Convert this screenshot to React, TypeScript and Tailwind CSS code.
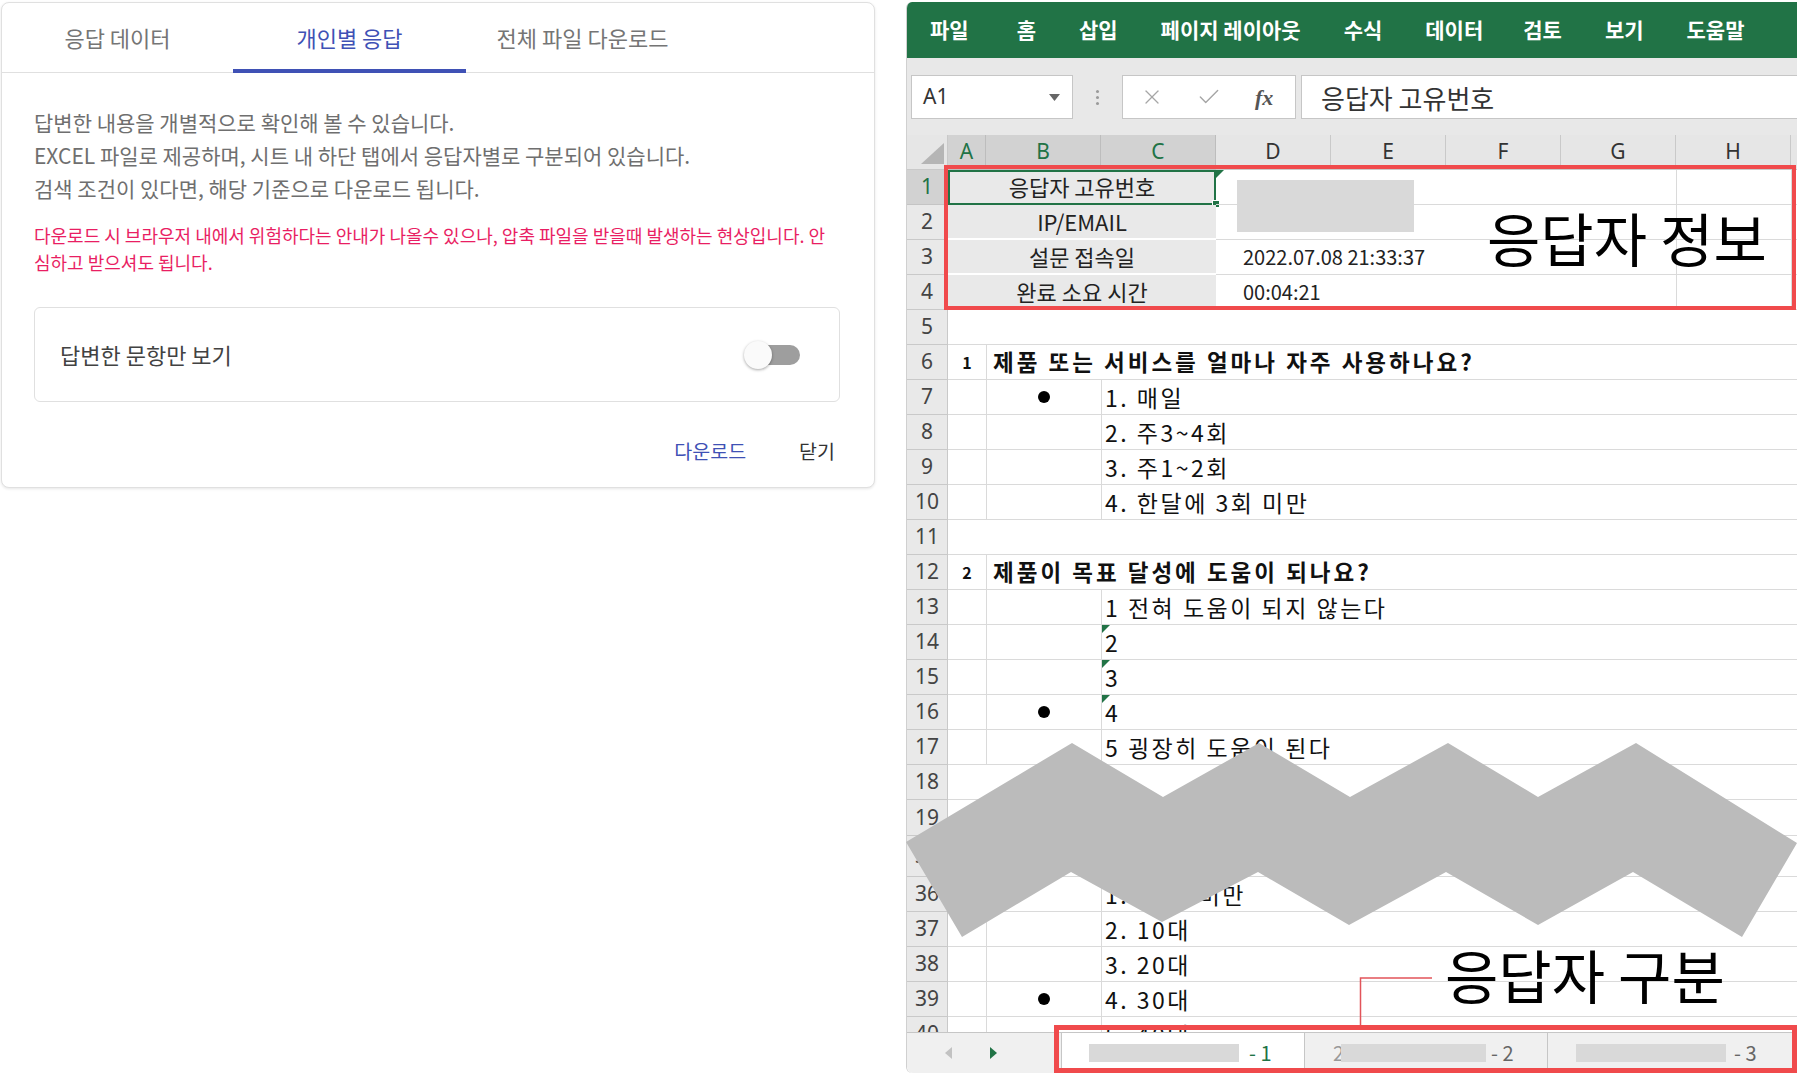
import { X, Check } from "lucide-react"

const GREEN = "#217346"

function RowHead({ n, sel = false }: { n: string; sel?: boolean }) {
  return (
    <div
      className={
        sel
          ? "flex w-[41px] shrink-0 items-center justify-center border-b border-r border-[#c4c4c4] bg-[#d2d2d2] font-['Noto_Sans',sans-serif] text-[21px] text-[#217346]"
          : "flex w-[41px] shrink-0 items-center justify-center border-b border-r border-[#c9c9c9] bg-[#e9e9e9] font-['Noto_Sans',sans-serif] text-[21px] text-[#444]"
      }
    >
      {n}
    </div>
  )
}

function Tri() {
  return (
    <svg width="8" height="8" viewBox="0 0 8 8" className="absolute left-0 top-0">
      <polygon points="0,0 8,0 0,8" fill={GREEN} />
    </svg>
  )
}

function InfoRow({ n, label, sel = false, value, children }: { n: string; label: string; sel?: boolean; value?: string; children?: React.ReactNode }) {
  return (
    <div className="flex h-[35px] shrink-0">
      <RowHead n={n} sel={sel} />
      <div className="relative flex w-[268px] shrink-0 items-center justify-center border-b-2 border-white bg-[#e9e9e9] text-[22px] text-[#222]">
        {label}
        {sel && (
          <>
            <div className="absolute -bottom-[2px] left-0 right-0 top-0 border-2 border-[#217346]" />
            <div className="absolute -bottom-[5px] -right-[4px] h-[8px] w-[8px] border border-white bg-[#217346]" />
          </>
        )}
      </div>
      <div className="relative flex w-[230px] shrink-0 items-center border-b border-[#dadada] pl-[27px] text-[20px] text-[#222]">
        {value}
        {children}
      </div>
      <div className="w-[230px] shrink-0 border-b border-[#dadada]" />
      <div className="w-[115px] shrink-0 border-b border-l border-[#dadada]" />
      <div className="flex-1 border-b border-l border-[#dadada]" />
    </div>
  )
}

function EmptyRow({ n, tall = false, short = false }: { n: string; tall?: boolean; short?: boolean }) {
  return (
    <div className={tall ? "flex h-[41px] shrink-0" : short ? "flex h-[36px] shrink-0" : "flex h-[35px] shrink-0"}>
      <RowHead n={n} />
      <div className="flex-1 border-b border-[#dadada]" />
    </div>
  )
}

function QRow({ n, num, text }: { n: string; num: string; text: string }) {
  return (
    <div className="flex h-[35px] shrink-0">
      <RowHead n={n} />
      <div className="flex w-[38px] shrink-0 items-center justify-center border-b border-[#dadada] text-[16px] font-bold text-[#111]">
        {num}
      </div>
      <div className="flex flex-1 items-center whitespace-nowrap border-b border-l border-[#dadada] pl-[6px] text-[22.5px] font-bold tracking-[3px] text-[#111]">
        {text}
      </div>
    </div>
  )
}

function OptRow({ n, text, dot = false, tri = false, partial = false }: { n: string; text: string; dot?: boolean; tri?: boolean; partial?: boolean }) {
  return (
    <div className={partial ? "flex h-[15px] shrink-0 items-start overflow-hidden" : "flex h-[35px] shrink-0"}>
      <div className="flex h-[35px] w-full shrink-0">
        <RowHead n={n} />
        <div className="w-[38px] shrink-0 border-b border-[#dadada]" />
        <div className="flex w-[115px] shrink-0 items-center justify-center border-b border-l border-[#dadada]">
          {dot && <div className="h-[12px] w-[12px] rounded-full bg-black" />}
        </div>
        <div className="relative flex flex-1 items-center whitespace-nowrap border-b border-l border-[#dadada] pl-[3px] text-[23px] tracking-[2.5px] text-[#111]">
          {tri && <Tri />}
          {text}
        </div>
      </div>
    </div>
  )
}

function LeftPanel() {
  const tabs = ["응답 데이터", "개인별 응답", "전체 파일 다운로드"]
  return (
    <div className="ml-px mt-[2px] flex h-[486px] w-[874px] shrink-0 flex-col rounded-lg border border-[#e0e0e0] bg-white shadow-[0_1px_3px_rgba(0,0,0,0.1)]">
      <div className="flex h-[70px] shrink-0 border-b border-[#e0e0e0]">
        {tabs.map((t, i) => (
          <div key={t} className={i === 0 ? "relative flex w-[231px] items-center justify-center" : "relative flex w-[233px] items-center justify-center"}>
            <span className={i === 1 ? "text-[22px] text-[#3f51b5]" : "text-[22px] text-[#757575]"}>{t}</span>
            {i === 1 && <div className="absolute -bottom-px left-0 right-0 h-[4px] bg-[#3f51b5]" />}
          </div>
        ))}
      </div>
      <div className="flex flex-1 flex-col px-[32px] pt-[33px]">
        <div className="whitespace-nowrap text-[21px] leading-[33px] text-[#6f6f6f]">
          <p>답변한 내용을 개별적으로 확인해 볼 수 있습니다.</p>
          <p>EXCEL 파일로 제공하며, 시트 내 하단 탭에서 응답자별로 구분되어 있습니다.</p>
          <p>검색 조건이 있다면, 해당 기준으로 다운로드 됩니다.</p>
        </div>
        <div className="mt-[17px] whitespace-nowrap text-[18px] leading-[27px] text-[#e91e63]">
          <p>다운로드 시 브라우저 내에서 위험하다는 안내가 나올수 있으나, 압축 파일을 받을때 발생하는 현상입니다. 안</p>
          <p>심하고 받으셔도 됩니다.</p>
        </div>
        <div className="mt-[31px] flex h-[95px] w-[806px] items-center justify-between rounded-md border border-[#e0e0e0] pl-[25px] pr-[39px]">
          <span className="text-[22px] text-[#424242]">답변한 문항만 보기</span>
          <div className="relative h-[20px] w-[54px] rounded-full bg-[#9e9e9e]">
            <div className="absolute -left-[2px] -top-[4px] h-[28px] w-[28px] rounded-full bg-[#fafafa] shadow-[0_1px_3px_rgba(0,0,0,0.35)]" />
          </div>
        </div>
        <div className="mt-[34px] flex justify-end gap-[53px] pr-[7px] text-[19.5px]">
          <span className="text-[#3f51b5]">다운로드</span>
          <span className="text-[#333]">닫기</span>
        </div>
      </div>
    </div>
  )
}

function ColHead({ l, sel = false }: { l: string; sel?: boolean }) {
  return (
    <div
      className={
        sel
          ? "flex w-[115px] shrink-0 items-center justify-center border-b border-r border-[#bdbdbd] bg-[#d2d2d2] font-['Noto_Sans',sans-serif] text-[21px] text-[#217346]"
          : "flex w-[115px] shrink-0 items-center justify-center border-b border-r border-[#c9c9c9] bg-[#e6e6e6] font-['Noto_Sans',sans-serif] text-[21px] text-[#333]"
      }
    >
      {l}
    </div>
  )
}

function Excel() {
  const menu = ["파일", "홈", "삽입", "페이지 레이아웃", "수식", "데이터", "검토", "보기", "도움말"]
  return (
    <div className="ml-[31px] mt-[2px] flex h-[1071px] w-[891px] shrink-0 flex-col overflow-hidden rounded-l-md border-l border-[#d0d0d0] bg-white">
      <div className="flex h-[56px] shrink-0 items-center gap-[43px] bg-[#217346] pl-[23px] text-[21px] font-bold text-white">
        {menu.map((m, i) => (
          <span key={m} className={i === 0 ? "mr-[5px]" : i === 5 ? "-mr-[3px]" : ""}>{m}</span>
        ))}
      </div>
      <div className="flex h-[77px] shrink-0 items-start bg-[#e8e8e8] pl-[4px] pt-[17px]">
        <div className="flex h-[44px] w-[162px] shrink-0 items-center justify-between border border-[#c6c6c6] bg-white pl-[11px] pr-[12px]">
          <span className="font-['Noto_Sans',sans-serif] text-[21px] text-[#333]">A1</span>
          <svg width="11" height="7" viewBox="0 0 11 7">
            <polygon points="0,0 11,0 5.5,7" fill="#666" />
          </svg>
        </div>
        <div className="flex h-[44px] w-[49px] shrink-0 flex-col items-center justify-center gap-[3px]">
          <div className="h-[3px] w-[3px] rounded-full bg-[#9a9a9a]" />
          <div className="h-[3px] w-[3px] rounded-full bg-[#9a9a9a]" />
          <div className="h-[3px] w-[3px] rounded-full bg-[#9a9a9a]" />
        </div>
        <div className="flex h-[44px] w-[174px] shrink-0 items-center border border-[#c6c6c6] bg-white pl-[17px]">
          <X size={24} strokeWidth={1.3} className="text-[#a6a6a6]" />
          <Check size={26} strokeWidth={1.3} className="ml-[32px] text-[#a6a6a6]" />
          <span className="ml-[33px] font-['Liberation_Serif',serif] text-[22px] font-bold italic text-[#555]">fx</span>
        </div>
        <div className="ml-[5px] flex h-[44px] flex-1 items-center border border-r-0 border-[#c6c6c6] bg-white pl-[19px] text-[26px] text-[#333]">
          응답자 고유번호
        </div>
      </div>
      <div className="flex h-[35px] shrink-0 bg-[#e6e6e6]">
        <div className="relative w-[41px] shrink-0 border-b border-r border-[#c9c9c9]">
          <svg width="41" height="35" viewBox="0 0 41 35" className="absolute left-0 top-0">
            <polygon points="37,8 37,29 14,29" fill="#b5b5b5" />
          </svg>
        </div>
        <div className="flex w-[38px] shrink-0 items-center justify-center border-b border-r border-[#bdbdbd] bg-[#d2d2d2] font-['Noto_Sans',sans-serif] text-[21px] text-[#217346]">
          A
        </div>
        <ColHead l="B" sel />
        <ColHead l="C" sel />
        <ColHead l="D" />
        <ColHead l="E" />
        <ColHead l="F" />
        <ColHead l="G" />
        <ColHead l="H" />
        <div className="flex-1 border-b border-[#c9c9c9]" />
      </div>
      <div className="flex flex-1 flex-col">
        <InfoRow n="1" label="응답자 고유번호" sel>
          <Tri />
          <div className="absolute left-[21px] top-[10px] z-10 h-[52px] w-[177px] bg-[#d9d9d9]" />
        </InfoRow>
        <InfoRow n="2" label="IP/EMAIL" />
        <InfoRow n="3" label="설문 접속일" value="2022.07.08 21:33:37" />
        <InfoRow n="4" label="완료 소요 시간" value="00:04:21" />
        <EmptyRow n="5" />
        <QRow n="6" num="1" text="제품 또는 서비스를 얼마나 자주 사용하나요?" />
        <OptRow n="7" text="1. 매일" dot />
        <OptRow n="8" text="2. 주3~4회" />
        <OptRow n="9" text="3. 주1~2회" />
        <OptRow n="10" text="4. 한달에 3회 미만" />
        <EmptyRow n="11" />
        <QRow n="12" num="2" text="제품이 목표 달성에 도움이 되나요?" />
        <OptRow n="13" text="1 전혀 도움이 되지 않는다" />
        <OptRow n="14" text="2" tri />
        <OptRow n="15" text="3" tri />
        <OptRow n="16" text="4" tri dot />
        <OptRow n="17" text="5 굉장히 도움이 된다" />
        <EmptyRow n="18" />
        <EmptyRow n="19" short />
        <EmptyRow n="35" tall />
        <OptRow n="36" text="1. 10대 미만" />
        <OptRow n="37" text="2. 10대" />
        <OptRow n="38" text="3. 20대" />
        <OptRow n="39" text="4. 30대" dot />
        <OptRow n="40" text="5. 40대" partial />
      </div>
      <div className="flex h-[41px] shrink-0 rounded-bl-md border-t border-[#c6c6c6] bg-[#f0f0f0] text-[20px]">
        <div className="flex w-[148px] shrink-0 items-center pl-[38px]">
          <svg width="7" height="12" viewBox="0 0 7 12">
            <polygon points="7,0 7,12 0,6" fill="#c2c2c2" />
          </svg>
          <svg width="7" height="12" viewBox="0 0 7 12" className="ml-[38px]">
            <polygon points="0,0 0,12 7,6" fill={GREEN} />
          </svg>
        </div>
        <div className="ml-[6px] flex w-[244px] shrink-0 items-center border-l border-r border-[#c6c6c6] bg-white pl-[27px]">
          <div className="h-[18px] w-[150px] bg-[#d9d9d9]" />
          <span className="ml-[10px] text-[#217346]">- 1</span>
        </div>
        <div className="flex w-[243px] shrink-0 items-center border-r border-[#c6c6c6] pl-[28px]">
          <span className="text-[#999]">2</span>
          <div className="-ml-[3px] h-[18px] w-[145px] bg-[#d9d9d9]" />
          <span className="ml-[5px] text-[#666]">- 2</span>
        </div>
        <div className="flex flex-1 items-center pl-[28px]">
          <div className="h-[18px] w-[150px] bg-[#d9d9d9]" />
          <span className="ml-[8px] text-[#666]">- 3</span>
        </div>
      </div>
    </div>
  )
}

export default function App() {
  return (
    <div className="relative flex h-[1073px] w-[1800px] items-start overflow-hidden bg-white font-['Noto_Sans_CJK_KR','Noto_Sans',sans-serif]">
      <LeftPanel />
      <Excel />

      {/* annotations drawn over the spreadsheet */}
      <svg width="1800" height="1073" viewBox="0 0 1800 1073" className="pointer-events-none absolute left-0 top-0">
        <polygon
          points="906,842 1072,743 1163,797 1259,743 1350,797 1448,743 1538,797 1636,743 1797,843 1742,937 1633,872 1538,925 1446,872 1349,925 1258,872 1162,922 1071,872 962,937"
          fill="#bbbbbb"
        />
        <polyline points="1432,978 1360.5,978 1360.5,1026" fill="none" stroke="#e2545a" strokeWidth="1.5" />
      </svg>
      <div className="pointer-events-none absolute left-[944px] top-[165px] h-[145px] w-[852px] border-4 border-[#f04a4c]" />
      <div className="pointer-events-none absolute left-[1054px] top-[1025px] h-[48px] w-[743px] border-[5px] border-[#f04a4c]" />
      <div className="absolute left-[1487px] top-[208px] whitespace-nowrap text-[58px] leading-none text-black">응답자 정보</div>
      <div className="absolute left-[1445px] top-[945px] whitespace-nowrap text-[58px] leading-none text-black">응답자 구분</div>
    </div>
  )
}
